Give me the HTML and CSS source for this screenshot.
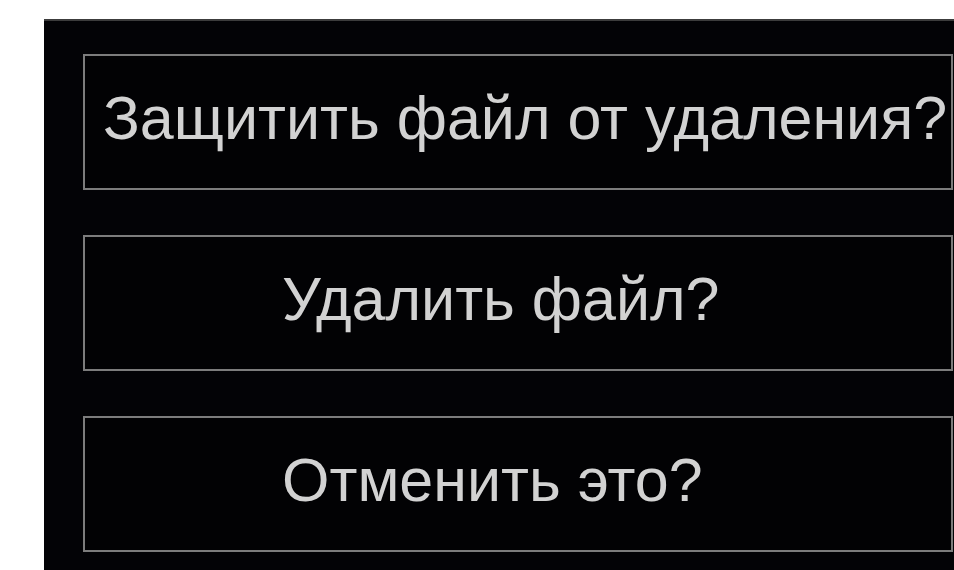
FILE: index.html
```html
<!DOCTYPE html>
<html lang="ru">
<head>
<meta charset="utf-8">
<title>Подтверждение</title>
<link rel="stylesheet" href="styles.css">
</head>
<body>
  <div class="panel">
    <div class="choices">
      <button class="choice choice-wide">Защитить файл от удаления?</button>
      <button class="choice">Удалить файл?</button>
      <button class="choice">Отменить это?</button>
    </div>
  </div>
</body>
</html>
```

FILE: styles.css
```css
html, body {
  margin: 0;
  height: 100%;
  background: #ffffff;
  overflow: hidden;
}

.panel {
  margin: 19px 0 0 44px;
  height: 551px;
  box-sizing: border-box;
  padding: 33px 1px 0 39px;
  background: #030306;
  border-top: 2px solid #3c3c3c;
}

.choices {
  display: flex;
  flex-direction: column;
  gap: 45px;
}

.choice {
  display: block;
  width: 100%;
  height: 136px;
  box-sizing: border-box;
  margin: 0;
  padding: 0 0 9px 197px;
  background: #020204;
  border: 2px solid #7c7c7c;
  border-radius: 0;
  color: #d2d2d2;
  font-family: "Liberation Sans", Arial, sans-serif;
  font-size: 61px;
  text-align: left;
  white-space: nowrap;
}

/* the long label nearly fills the button, so it starts close to the edge */
.choice-wide {
  padding-left: 18px;
}
```
